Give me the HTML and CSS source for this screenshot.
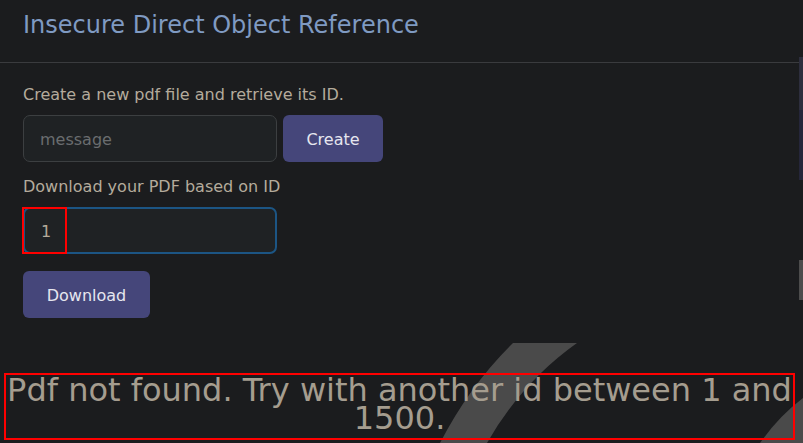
FILE: index.html
```html
<!DOCTYPE html>
<html>
<head>
<meta charset="utf-8">
<link rel="stylesheet" href="styles.css">
</head>
<body>
<div class="page">
  <svg class="deco" width="803" height="443" viewBox="0 0 803 443">
    <path d="M513,343 L577,343 Q522,382 487,443 L440,443 Q470,385 513,343 Z" fill="#4a4a4a"/>
    <path d="M803,398 L803,443 L760,443 Q779,416 803,398 Z" fill="#4a4a4a"/>
  </svg>
  <div class="side-strip"><span class="s1"></span><span class="s2"></span><span class="s3"></span></div>
  <header class="header">
    <h1 class="title">Insecure Direct Object Reference</h1>
  </header>
  <main class="content">
    <label class="label">Create a new pdf file and retrieve its ID.</label>
    <div class="row">
      <input class="field" type="text" placeholder="message">
      <button class="btn create">Create</button>
    </div>
    <label class="label second">Download your PDF based on ID</label>
    <div class="id-wrap">
      <input class="field id-field" type="text" value="1">
      <span class="mark"></span>
    </div>
    <button class="btn download">Download</button>
    <div class="message">Pdf not found. Try with another id between 1 and 1500.</div>
  </main>
</div>
</body>
</html>
```
FILE: styles.css
```css
html, body {
  margin: 0;
  padding: 0;
  background: #1b1c1e;
  overflow: hidden;
}
body {
  font-family: "DejaVu Sans", sans-serif;
  width: 803px;
  height: 443px;
}
.page {
  position: relative;
  width: 803px;
  height: 443px;
  overflow: hidden;
}
.deco {
  position: absolute;
  left: 0;
  top: 0;
  z-index: 0;
}
.side-strip {
  position: absolute;
  right: 0;
  top: 57px;
  width: 4px;
  display: flex;
  flex-direction: column;
}
.side-strip .s1 { height: 53px; background: #2d2e3d; }
.side-strip .s2 { height: 70px; background: #25263a; }
.side-strip .s3 { height: 40px; margin-top: 80px; background: #4c4c4c; }
.header {
  position: relative;
  width: 799px;
  height: 63px;
  box-sizing: border-box;
  padding: 10px 23px 0;
  border-bottom: 1px solid #3a3b3e;
}
.title {
  margin: 0;
  font-size: 24px;
  line-height: 30px;
  font-weight: normal;
  color: #7f9ac2;
}
.content {
  position: relative;
  z-index: 1;
  padding: 22px 0 0 23px;
  display: flex;
  flex-direction: column;
  align-items: flex-start;
}
.label {
  display: block;
  font-size: 16px;
  line-height: 20px;
  color: #b4ab9c;
  margin-bottom: 10px;
}
.label.second {
  margin-top: 15px;
}
.row {
  display: flex;
  gap: 6px;
}
.field {
  box-sizing: border-box;
  width: 254px;
  height: 47px;
  background: #1f2224;
  border: 1px solid #3c3f41;
  border-radius: 7px;
  padding: 1px 16px 0;
  font-family: "DejaVu Sans", sans-serif;
  font-size: 16px;
  color: #b4ab9c;
  outline: none;
}
.field::placeholder {
  color: #6a6d6f;
}
.id-wrap {
  position: relative;
}
.id-field {
  border: 2px solid #1c5584;
  padding-left: 16px;
}
.mark {
  position: absolute;
  left: -1px;
  top: 0;
  width: 45px;
  height: 47px;
  box-sizing: border-box;
  border: 2px solid #ff0000;
}
.btn {
  box-sizing: border-box;
  height: 47px;
  border: none;
  border-radius: 6px;
  background: #45467a;
  color: #e6e6ef;
  font-family: "DejaVu Sans", sans-serif;
  font-size: 16px;
  padding: 2px 0 0;
}
.btn.create { width: 100px; }
.btn.download { width: 127px; margin-top: 17px; }
.message {
  align-self: stretch;
  margin: 55px 8px 0 -19px;
  box-sizing: border-box;
  border: 2px solid #ff0000;
  text-align: center;
  font-size: 32px;
  line-height: 28px;
  padding: 1px 0 6px;
  color: #a59d8f;
}
```
